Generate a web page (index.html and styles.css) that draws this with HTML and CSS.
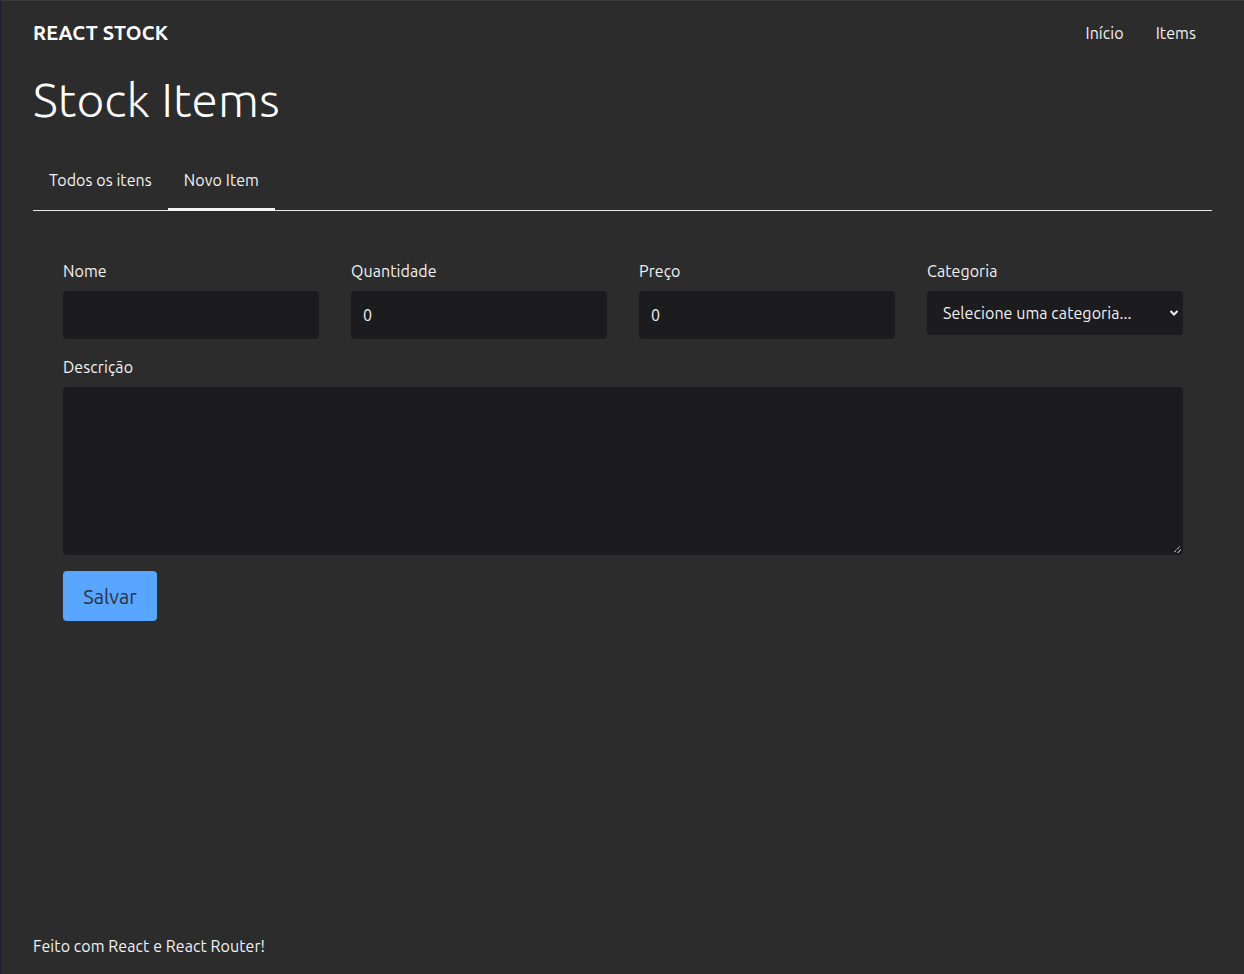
FILE: index.html
```html
<!DOCTYPE html>
<html lang="pt-BR">
<head>
<meta charset="utf-8">
<title>React Stock</title>
<link rel="stylesheet" href="styles.css">
</head>
<body>
<div class="page">
  <header class="header">
    <span class="logo">REACT STOCK</span>
    <nav class="nav">
      <a class="nav-link" href="#">Início</a>
      <a class="nav-link" href="#">Items</a>
    </nav>
  </header>
  <main class="main">
    <h1 class="title">Stock Items</h1>
    <div class="tabs">
      <a class="tab" href="#">Todos os itens</a>
      <a class="tab tab-active" href="#">Novo Item</a>
    </div>
    <form class="form">
      <div class="row">
        <div class="field">
          <label class="label">Nome</label>
          <input class="input" type="text">
        </div>
        <div class="field">
          <label class="label">Quantidade</label>
          <input class="input" type="text" value="0">
        </div>
        <div class="field">
          <label class="label">Preço</label>
          <input class="input" type="text" value="0">
        </div>
        <div class="field">
          <label class="label">Categoria</label>
          <div class="select">
            <span>Selecione uma categoria...</span>
            <svg class="chev" width="10" height="8" viewBox="0 0 10 8"><path d="M1.5 2 L5 5.5 L8.5 2" fill="none" stroke="#f0f0f0" stroke-width="2"/></svg>
          </div>
        </div>
      </div>
      <div class="field">
        <label class="label">Descrição</label>
        <div class="textarea"><span class="grip"></span></div>
      </div>
      <div class="actions">
        <button class="btn" type="button">Salvar</button>
      </div>
    </form>
  </main>
  <footer class="footer">Feito com React e React Router!</footer>
</div>
</body>
</html>
```

FILE: styles.css
```css
* { box-sizing: border-box; }
html, body { margin: 0; padding: 0; }
body {
  background: #2c2c2c;
  color: #f2f2f2;
  font-family: "Ubuntu", "Open Sans", "Noto Sans", sans-serif;
  font-size: 16px;
  letter-spacing: 0.07px;
}
.page {
  height: 974px;
  display: flex;
  flex-direction: column;
  padding: 0 32px 0 32px;
  border-left: 1px solid #1d1d33;
  border-top: 1px solid #3a3a3f;
}
.header {
  height: 64px;
  display: flex;
  align-items: center;
  justify-content: space-between;
}
.logo {
  font-weight: 700;
  font-size: 20px;
  line-height: 22px;
  color: #fff;
  letter-spacing: 0.2px;
}
.nav { display: flex; }
.nav-link {
  color: #f2f2f2;
  text-decoration: none;
  padding: 0 16px;
  font-size: 16px;
}
.main { flex: 1; }
.title {
  margin: 6px 0 0;
  font-size: 48px;
  font-weight: 300;
  line-height: 56px;
  color: #fff;
  letter-spacing: 0.1px;
}
.tabs {
  margin-top: 27px;
  display: flex;
  border-bottom: 1px solid #e8e8e8;
}
.tab {
  color: #f2f2f2;
  text-decoration: none;
  padding: 14px 16px 16px;
  line-height: 24px;
  border-bottom: 3px solid transparent;
  margin-bottom: -1px;
}
.tab-active { border-bottom-color: #f5f5f5; }
.form {
  padding: 48px 29px 0 30px;
  display: flex;
  flex-direction: column;
  gap: 16px;
}
.row {
  display: grid;
  grid-template-columns: repeat(4, 1fr);
  gap: 32px;
  align-items: start;
}
.field {
  display: flex;
  flex-direction: column;
  gap: 8px;
}
.label {
  font-size: 16px;
  line-height: 24px;
  color: #f2f2f2;
}
.input {
  height: 48px;
  background: #1c1b1e;
  border: none;
  border-radius: 4px;
  padding: 0 12px;
  color: #f2f2f2;
  font: inherit;
  font-size: 16px;
  outline: none;
}
.select {
  height: 44px;
  background: #1c1b1e;
  border-radius: 4px;
  padding: 0 4px 0 16px;
  display: flex;
  align-items: center;
  justify-content: space-between;
  color: #f2f2f2;
  font-size: 16px;
}
.textarea {
  height: 168px;
  background: #1c1b1e;
  border-radius: 4px;
  position: relative;
}
.grip {
  position: absolute;
  right: 2px;
  bottom: 2px;
  width: 7px;
  height: 7px;
  background: linear-gradient(135deg, transparent 40%, #888 40%, #888 50%, transparent 50%, transparent 70%, #888 70%, #888 80%, transparent 80%);
}
.actions { display: flex; }
.btn {
  height: 50px;
  width: 94px;
  background: #58a6ff;
  color: #2c313a;
  border: none;
  border-radius: 4px;
  font: inherit;
  font-size: 20px;
}
.footer {
  padding-bottom: 16px;
  line-height: 24px;
  font-size: 16px;
  color: #f2f2f2;
}
```
